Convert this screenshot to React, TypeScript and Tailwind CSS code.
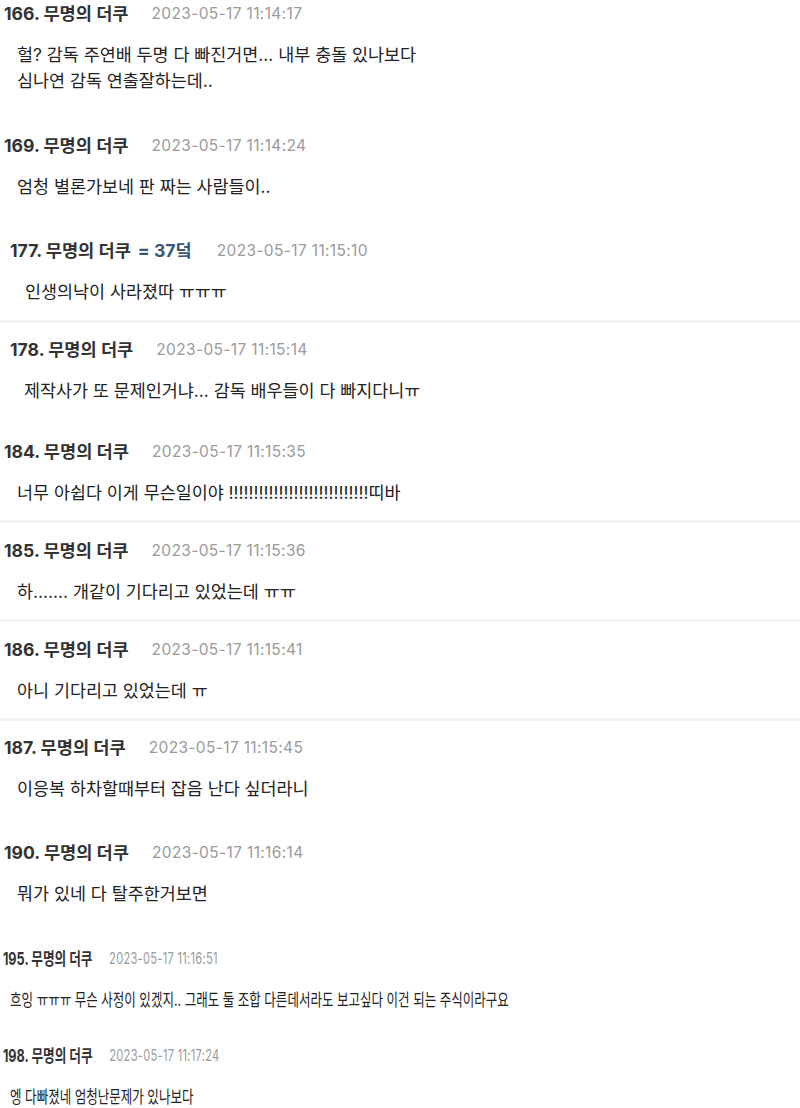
import React from "react";

type Comment = {
	no: number;
	nick: string;
	extra?: string;
	time: string;
	lines: string[];
	rowCls: string;
	headCls: string;
	bodyCls: string;
	squeeze?: boolean;
};

const comments: Comment[] = [
	{
		no: 166,
		nick: "무명의 더쿠",
		time: "2023-05-17 11:14:17",
		lines: ["헐? 감독 주연배 두명 다 빠진거면... 내부 충돌 있나보다", "심나연 감독 연출잘하는데.."],
		rowCls: "h-[132px]",
		headCls: "pl-[4px]",
		bodyCls: "pl-[17px]",
	},
	{
		no: 169,
		nick: "무명의 더쿠",
		time: "2023-05-17 11:14:24",
		lines: ["엄청 별론가보네 판 짜는 사람들이.."],
		rowCls: "h-[105px]",
		headCls: "pl-[4px]",
		bodyCls: "pl-[17px]",
	},
	{
		no: 177,
		nick: "무명의 더쿠",
		extra: "= 37덬",
		time: "2023-05-17 11:15:10",
		lines: ["인생의낙이 사라졌따 ㅠㅠㅠ"],
		rowCls: "h-[83px]",
		headCls: "pl-[10px]",
		bodyCls: "pl-[25px]",
	},
	{
		no: 178,
		nick: "무명의 더쿠",
		time: "2023-05-17 11:15:14",
		lines: ["제작사가 또 문제인거냐... 감독 배우들이 다 빠지다니ㅠ"],
		rowCls: "h-[115px] pt-[13px]",
		headCls: "pl-[10px]",
		bodyCls: "pl-[24px]",
	},
	{
		no: 184,
		nick: "무명의 더쿠",
		time: "2023-05-17 11:15:35",
		lines: ["너무 아쉽다 이게 무슨일이야 !!!!!!!!!!!!!!!!!!!!!!!!!!!!띠바"],
		rowCls: "h-[82px]",
		headCls: "pl-[4px]",
		bodyCls: "pl-[17px]",
	},
	{
		no: 185,
		nick: "무명의 더쿠",
		time: "2023-05-17 11:15:36",
		lines: ["하....... 개같이 기다리고 있었는데 ㅠㅠ"],
		rowCls: "h-[96px] pt-[14px]",
		headCls: "pl-[4px]",
		bodyCls: "pl-[17px]",
	},
	{
		no: 186,
		nick: "무명의 더쿠",
		time: "2023-05-17 11:15:41",
		lines: ["아니 기다리고 있었는데 ㅠ"],
		rowCls: "h-[96px] pt-[14px]",
		headCls: "pl-[4px]",
		bodyCls: "pl-[17px]",
	},
	{
		no: 187,
		nick: "무명의 더쿠",
		time: "2023-05-17 11:15:45",
		lines: ["이응복 하차할때부터 잡음 난다 싶더라니"],
		rowCls: "h-[118px] pt-[13px]",
		headCls: "pl-[4px]",
		bodyCls: "pl-[17px]",
	},
	{
		no: 190,
		nick: "무명의 더쿠",
		time: "2023-05-17 11:16:14",
		lines: ["뭐가 있네 다 탈주한거보면"],
		rowCls: "h-[106px]",
		headCls: "pl-[4px]",
		bodyCls: "pl-[17px]",
	},
	{
		no: 195,
		nick: "무명의 더쿠",
		time: "2023-05-17 11:16:51",
		lines: ["흐잉 ㅠㅠㅠ 무슨 사정이 있겠지.. 그래도 둘 조합 다른데서라도 보고싶다 이건 되는 주식이라구요"],
		rowCls: "h-[97px]",
		headCls: "pl-[4px]",
		bodyCls: "pl-[14px]",
		squeeze: true,
	},
	{
		no: 198,
		nick: "무명의 더쿠",
		time: "2023-05-17 11:17:24",
		lines: ["엥 다빠졌네 엄청난문제가 있나보다"],
		rowCls: "h-[66px]",
		headCls: "pl-[4px]",
		bodyCls: "pl-[14px]",
		squeeze: true,
	},
];

// rows that get the thin grey rule below them
const ruled = [177, 184, 185, 186];

const CommentRow = ({ c }: { c: Comment }) => {
	const sq = c.squeeze ? "origin-left scale-x-[0.72] whitespace-nowrap" : "whitespace-nowrap";
	return (
		<div className={c.rowCls}>
			<div className={`${c.headCls} ${sq} flex h-[28px] items-center`}>
				<span className="text-[17.6px] font-bold text-[#333]">
					{c.no}. {c.nick}
				</span>
				{c.extra && (
					<span className="ml-[7px] text-[17.6px] font-bold text-[#3c5676]">{c.extra}</span>
				)}
				<span
					className={`${c.extra ? "ml-[25px]" : "ml-[23px]"} text-[15.5px] tracking-[0.35px] text-[#9a9a9a]`}
				>
					{c.time}
				</span>
			</div>
			<div className={`${c.bodyCls} ${sq} mt-[14px] text-[17.4px] leading-[26px] text-[#222]`}>
				{c.lines.map((l, i) => (
					<div key={i}>{l}</div>
				))}
			</div>
		</div>
	);
};

export default function App() {
	return (
		<div
			className="h-[1108px] w-[800px] overflow-hidden bg-white"
			style={{ fontFamily: 'Inter, "Noto Sans CJK KR", sans-serif' }}
		>
			{comments.map((c) => (
				<React.Fragment key={c.no}>
					<CommentRow c={c} />
					{ruled.includes(c.no) && <div className="h-[3px] bg-[#f3f3f3]" />}
				</React.Fragment>
			))}
		</div>
	);
}
